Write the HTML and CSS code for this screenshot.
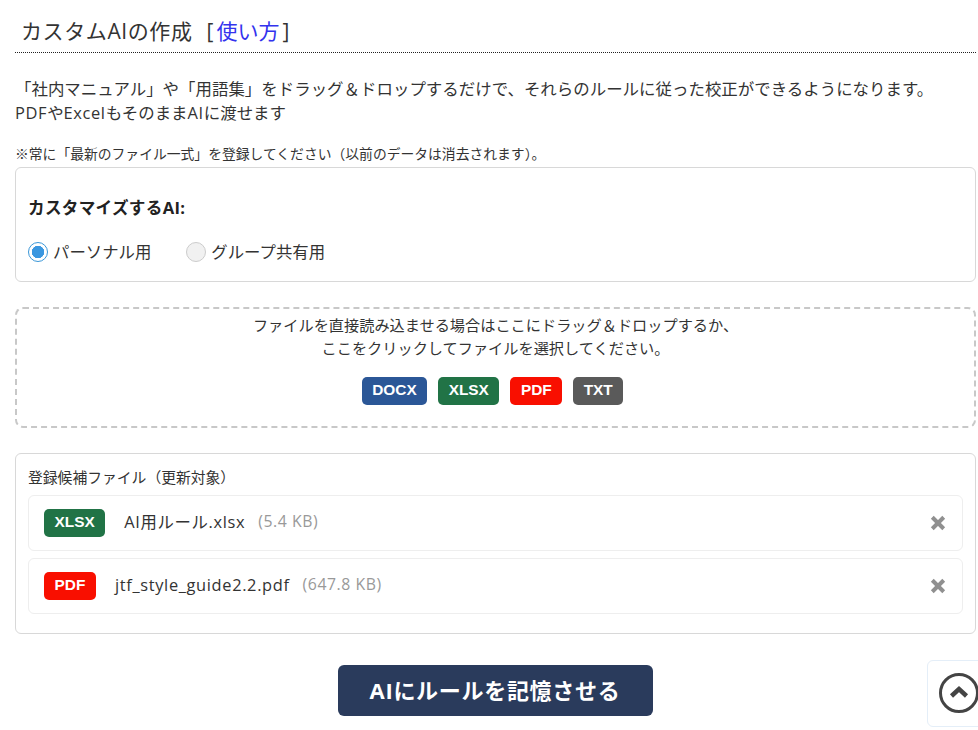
FILE: index.html
```html
<!DOCTYPE html>
<html lang="ja">
<head>
<meta charset="utf-8">
<title>カスタムAIの作成</title>
<link rel="stylesheet" href="styles.css">
</head>
<body>
<main class="page">
  <h1 class="title">カスタムAIの作成<span class="howto">[<a href="#">使い方</a>]</span></h1>
  <p class="lead">「社内マニュアル」や「用語集」をドラッグ＆ドロップするだけで、それらのルールに従った校正ができるようになります。<br><span class="lat">PDF</span>や<span class="lat">Excel</span>もそのまま<span class="lat">AI</span>に渡せます</p>
  <p class="note">※常に「最新のファイル一式」を登録してください（以前のデータは消去されます）。</p>
  <section class="panel target">
    <h2 class="target-title">カスタマイズするAI:</h2>
    <div class="radios">
      <label class="radio"><span class="dot on"></span>パーソナル用</label>
      <label class="radio"><span class="dot"></span>グループ共有用</label>
    </div>
  </section>
  <section class="drop">
    <p class="drop-text">ファイルを直接読み込ませる場合はここにドラッグ＆ドロップするか、<br>ここをクリックしてファイルを選択してください。</p>
    <div class="types">
      <span class="badge docx">DOCX</span>
      <span class="badge xlsx">XLSX</span>
      <span class="badge pdf">PDF</span>
      <span class="badge txt">TXT</span>
    </div>
  </section>
  <section class="panel files">
    <div class="files-title">登録候補ファイル（更新対象）</div>
    <div class="file">
      <span class="badge wide xlsx">XLSX</span>
      <span class="fname">AI用ルール.xlsx</span>
      <span class="fsize">(5.4 KB)</span>
      <svg class="remove" viewBox="0 0 14 14"><path d="M2 2 12 12M12 2 2 12"/></svg>
    </div>
    <div class="file">
      <span class="badge wide pdf">PDF</span>
      <span class="fname">jtf_style_guide2.2.pdf</span>
      <span class="fsize">(647.8 KB)</span>
      <svg class="remove" viewBox="0 0 14 14"><path d="M2 2 12 12M12 2 2 12"/></svg>
    </div>
  </section>
  <div class="actions"><button class="submit">AIにルールを記憶させる</button></div>
</main>
<a class="totop" href="#"><svg viewBox="0 0 40 40"><circle cx="20" cy="20" r="18.5"/><path d="M12.500 23 20 16 27.500 23"/></svg></a>
</body>
</html>
```
FILE: styles.css
```css
* { box-sizing: border-box; }
html, body { margin: 0; height: 730px; overflow: hidden; background: #fff; }
body {
  font-family: "Open Sans", "Noto Sans CJK JP", sans-serif;
  color: #333;
  font-size: 15px;
}
.page { width: 961px; margin-left: 15px; padding-top: 15px; }
.title {
  margin: 0;
  height: 38px;
  padding-left: 6px;
  font-size: 21px;
  line-height: 32px;
  font-weight: 400;
  letter-spacing: 0.600px;
  border-bottom: 1px dotted #222;
}
.howto { margin-left: 14px; letter-spacing: 0; }
.howto a { margin: 0 3px; color: #3333ee; text-decoration: none; }
.lead { margin: 24px 0 0; font-size: 16.470px; line-height: 24px; color: #333; }
.lat { letter-spacing: 0.600px; }
.note { margin: 17px 0 0; font-size: 13.800px; line-height: 24px; height: 25px; }
.panel { border: 1px solid #d8d8d8; border-radius: 6px; }
.target { height: 115px; padding: 28px 12px 0; }
.target-title { margin: 0; font-size: 16.600px; line-height: 24px; font-weight: 700; letter-spacing: 0.300px; color: #222; }
.radios { display: flex; gap: 35px; margin-top: 20px; }
.radio { display: flex; align-items: center; gap: 5px; font-size: 16.400px; line-height: 24px; }
.dot { width: 20px; height: 20px; border-radius: 50%; border: 1px solid #ccc; background: #f1f1f1; }
.dot.on { border-color: #3a97d8; background: radial-gradient(circle, #3a97e0 0 6px, #fff 6.500px); }
.drop {
  margin-top: 25px;
  height: 121px;
  border: 2px dashed #c8c8c8;
  border-radius: 8px;
  padding-top: 5px;
  text-align: center;
}
.drop-text { margin: 0; font-size: 15.200px; line-height: 23px; }
.types { display: flex; justify-content: center; gap: 11px; margin-top: 17px; padding-right: 6px; }
.badge {
  height: 28px;
  padding: 0 10.500px;
  border-radius: 5px;
  color: #fff;
  font-family: "Liberation Sans", sans-serif;
  font-size: 15.400px;
  font-weight: 700;
  line-height: 26px;
}
.badge.wide { min-width: 52px; text-align: center; }
.docx { background: #2b5797; }
.xlsx { background: #217346; }
.pdf { background: #f90f00; }
.txt { background: #5a5a5a; }
.files { margin-top: 25px; height: 181px; padding: 11px 12px 0; }
.files-title { font-size: 14.800px; line-height: 24px; }
.file {
  display: flex;
  align-items: center;
  height: 56px;
  margin-top: 7px;
  padding: 0 16px 0 15px;
  border: 1px solid #eee;
  border-radius: 6px;
}
.files-title + .file { margin-top: 6px; }
.fname { margin: 0 0 4px 19px; font-size: 16.400px; letter-spacing: 0.650px; }
.fsize { margin: 0 0 4px 13px; font-size: 15.800px; letter-spacing: 0.550px; color: #999; }
.remove { margin-left: auto; width: 16px; height: 16px; fill: none; stroke: #909090; stroke-width: 3.500px; }
.actions { display: flex; justify-content: center; margin-top: 31px; padding-right: 1px; }
.submit {
  width: 315px;
  height: 51px;
  padding: 0 0 4px;
  border: 0;
  border-radius: 6px;
  background: #2a3b5c;
  color: #fff;
  font-family: inherit;
  font-size: 22px;
  font-weight: 700;
  letter-spacing: 0.700px;
}
.totop {
  position: absolute;
  left: 927px;
  top: 660px;
  width: 60px;
  height: 67px;
  border: 1px solid #e4eef8;
  border-radius: 6px;
  background: #fff;
}
.totop svg { display: block; width: 40px; height: 40px; margin: 12px 0 0 11px; fill: none; stroke: #444; stroke-width: 3px; }
.totop path { stroke-width: 4.500px; }
```
